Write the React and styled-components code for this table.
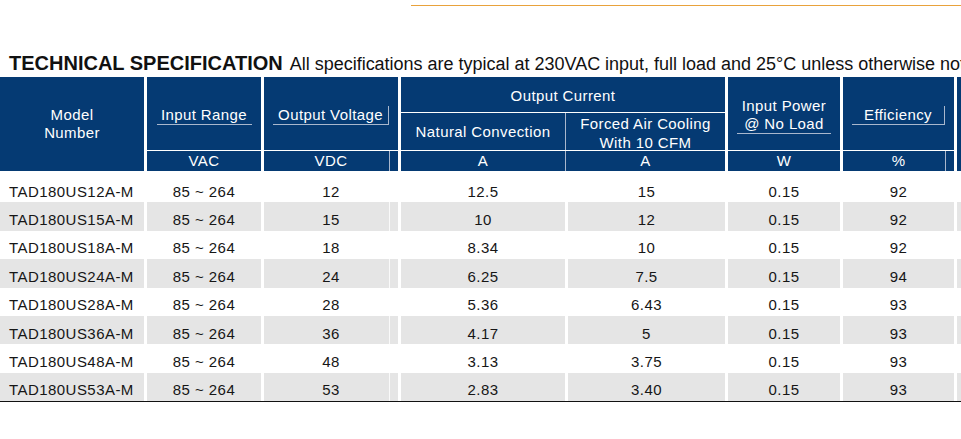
import React from "react";
import styled, { createGlobalStyle } from "styled-components";

const Global = createGlobalStyle`
  html, body { margin: 0; padding: 0; background: #fff; }
  body { font-family: "Liberation Sans", Arial, sans-serif; }
`;

const COLS = "144px 114px 134px 164px 157px 112px 111px 200px";
const NAVY = "#053a73";
const RULE = "#a9b7cd";

const Page = styled.div`
  width: 961px;
  height: 439px;
  overflow: hidden;
`;

const TopRule = styled.div`
  margin: 5px 0 0 411px;
  height: 1px;
  background: #e9a23b;
`;

const Title = styled.h1`
  margin: 46px 0 1px;
  padding-left: 9px;
  font-size: 20px;
  line-height: 23px;
  font-weight: 700;
  color: #111;
  white-space: nowrap;
`;

const Note = styled.span`
  font-size: 18px;
  font-weight: 400;
  margin-left: 3px;
  letter-spacing: -0.01px;
`;

const Head = styled.div`
  display: grid;
  grid-template-columns: ${COLS};
  grid-template-rows: 73px 20px;
  gap: 1px 3px;
  background: #fff;
  color: #fff;
  font-size: 15px;
  letter-spacing: 0.4px;
`;

const HeadCell = styled.div`
  grid-column: ${(p) => p.$col};
  grid-row: ${(p) => p.$row || "1"};
  background: ${NAVY};
  display: flex;
  align-items: center;
  justify-content: center;
  text-align: center;
  line-height: 18px;
  padding-top: ${(p) => p.$pt || 0}px;
  box-sizing: border-box;
`;

const Label = styled.span`
  display: inline-block;
  width: ${(p) => p.$w}px;
  box-sizing: border-box;
  border-bottom: 1px solid ${RULE};
  border-right: ${(p) => (p.$boxed ? `1px solid ${RULE}` : "none")};
  line-height: 18px;
  white-space: nowrap;
`;

const UnitCell = styled.div`
  position: relative;
  grid-column: ${(p) => p.$col};
  grid-row: ${(p) => p.$row || "2"};
  background: ${NAVY};
  display: flex;
  align-items: center;
  justify-content: center;
  line-height: 20px;
  border-left: ${(p) => (p.$divide ? `1px solid ${RULE}` : "none")};
  ${(p) =>
    p.$tick
      ? `&::after { content: ""; position: absolute; top: 0; bottom: 0; right: ${p.$tick}px; width: 1px; background: ${RULE}; }`
      : ""}
`;

const Group = styled.div`
  grid-column: 4 / 6;
  grid-row: 1 / 3;
  display: grid;
  grid-template-columns: 164px 1fr;
  grid-template-rows: 35px 37px 20px;
  row-gap: 1px;
  background: #fff;
`;

const SubHead = styled.div`
  grid-column: ${(p) => p.$col};
  background: ${NAVY};
  display: flex;
  align-items: center;
  justify-content: center;
  text-align: center;
  line-height: ${(p) => p.$lh || 18}px;
  padding-top: ${(p) => p.$pt || 0}px;
  box-sizing: border-box;
  border-left: ${(p) => (p.$divide ? `1px solid ${RULE}` : "none")};
`;

const Body = styled.div`
  padding-top: 3px;
  border-bottom: 1px solid #111;
  width: 1057px;
`;

const Row = styled.div`
  display: grid;
  grid-template-columns: ${COLS};
  column-gap: 3px;
  height: 28.375px;
`;

const Cell = styled.div`
  position: relative;
  background: ${(p) => (p.$alt ? "#e5e5e5" : "#fff")};
  display: flex;
  align-items: center;
  justify-content: ${(p) => (p.$left ? "flex-start" : "center")};
  padding: 6px 0 0 ${(p) => (p.$left ? 9 : 0)}px;
  box-sizing: border-box;
  font-size: 15px;
  letter-spacing: 0.45px;
  color: #161616;
  white-space: nowrap;
  ${(p) =>
    p.$tick
      ? `&::after { content: ""; position: absolute; top: 0; bottom: 0; right: ${p.$tick}px; width: 1px; background: rgba(255,255,255,0.8); }`
      : ""}
`;

const rows = [
  ["TAD180US12A-M", "85 ~ 264", "12", "12.5", "15", "0.15", "92"],
  ["TAD180US15A-M", "85 ~ 264", "15", "10", "12", "0.15", "92"],
  ["TAD180US18A-M", "85 ~ 264", "18", "8.34", "10", "0.15", "92"],
  ["TAD180US24A-M", "85 ~ 264", "24", "6.25", "7.5", "0.15", "94"],
  ["TAD180US28A-M", "85 ~ 264", "28", "5.36", "6.43", "0.15", "93"],
  ["TAD180US36A-M", "85 ~ 264", "36", "4.17", "5", "0.15", "93"],
  ["TAD180US48A-M", "85 ~ 264", "48", "3.13", "3.75", "0.15", "93"],
  ["TAD180US53A-M", "85 ~ 264", "53", "2.83", "3.40", "0.15", "93"],
];

export default function App() {
  return (
    <Page>
      <Global />
      <TopRule />
      <Title>
        TECHNICAL SPECIFICATION
        <Note> All specifications are typical at 230VAC input, full load and 25°C unless otherwise noted.</Note>
      </Title>
      <Head>
        <HeadCell $col="1" $row="1 / 3">
          Model
          <br />
          Number
        </HeadCell>
        <HeadCell $col="2" $pt={3}>
          <Label $w={95}>Input Range</Label>
        </HeadCell>
        <HeadCell $col="3" $pt={3}>
          <Label $w={116} $boxed>
            Output Voltage
          </Label>
        </HeadCell>
        <Group>
          <SubHead $col="1 / 3" $pt={3}>Output Current</SubHead>
          <SubHead $col="1">Natural Convection</SubHead>
          <SubHead $col="2" $divide $pt={4} $lh={18.4}>
            Forced Air Cooling
            <br />
            With 10 CFM
          </SubHead>
          <UnitCell $col="1" $row="3">A</UnitCell>
          <UnitCell $col="2" $row="3" $divide>A</UnitCell>
        </Group>
        <HeadCell $col="6" $pt={3}>
          <Label $w={94}>
            Input Power
            <br />@ No Load
          </Label>
        </HeadCell>
        <HeadCell $col="7" $pt={3}>
          <Label $w={93} $boxed>
            Efficiency
          </Label>
        </HeadCell>
        <HeadCell $col="8" $row="1 / 3" />
        <UnitCell $col="2">VAC</UnitCell>
        <UnitCell $col="3" $tick={8}>VDC</UnitCell>
        <UnitCell $col="6">W</UnitCell>
        <UnitCell $col="7" $tick={8}>%</UnitCell>
      </Head>
      <Body>
        {rows.map((r, i) => {
          const alt = i % 2 === 1;
          return (
            <Row key={r[0]}>
              <Cell $alt={alt} $left>{r[0]}</Cell>
              <Cell $alt={alt}>{r[1]}</Cell>
              <Cell $alt={alt} $tick={alt ? 8 : 0}>{r[2]}</Cell>
              <Cell $alt={alt}>{r[3]}</Cell>
              <Cell $alt={alt}>{r[4]}</Cell>
              <Cell $alt={alt}>{r[5]}</Cell>
              <Cell $alt={alt}>{r[6]}</Cell>
              <Cell $alt={alt} />
            </Row>
          );
        })}
      </Body>
    </Page>
  );
}
